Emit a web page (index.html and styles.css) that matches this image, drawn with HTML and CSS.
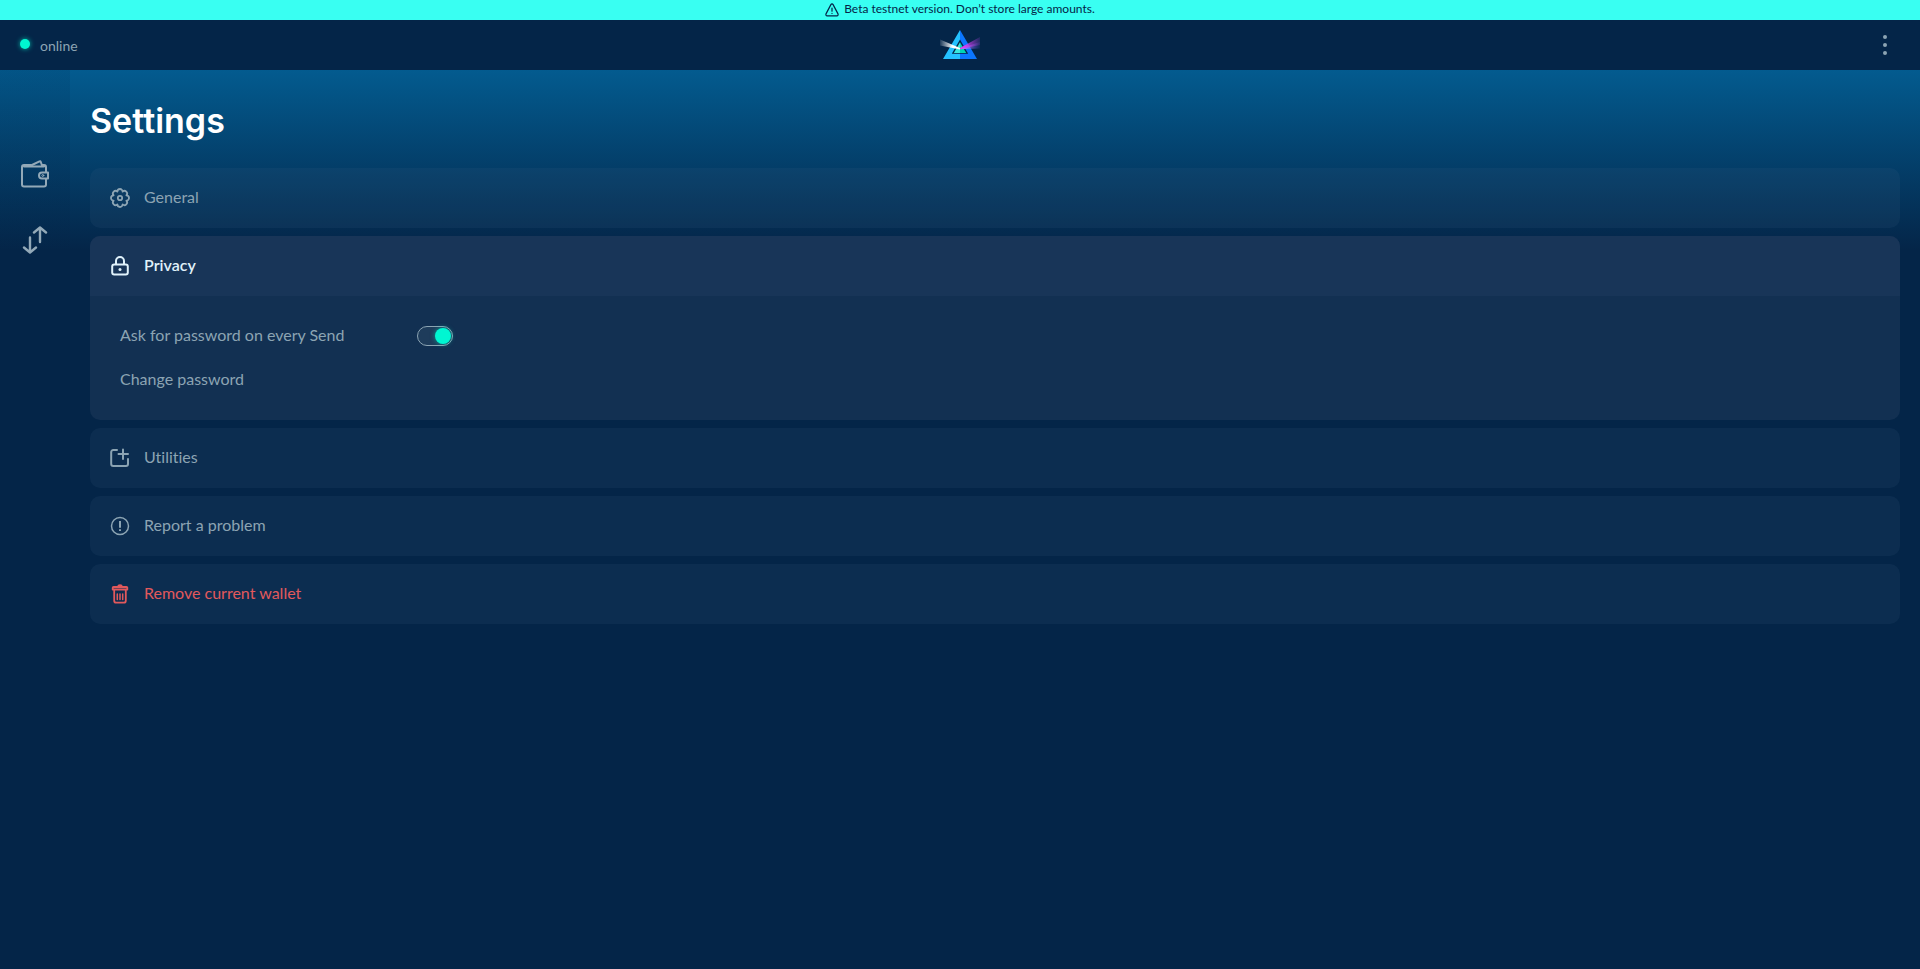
FILE: index.html
```html
<!DOCTYPE html>
<html lang="en">
<head>
<meta charset="utf-8">
<title>Settings</title>
<meta name="viewport" content="width=device-width, initial-scale=1">
<link rel="stylesheet" href="styles.css">
</head>
<body>
<div class="banner" role="status">
  <svg class="banner-icon" width="14" height="14" viewBox="0 0 14 14" fill="none" stroke="currentColor" stroke-width="1.2" stroke-linecap="round" stroke-linejoin="round"><path d="M5.9 1.6 1 10.9c-.4.9.1 1.900 1.100 1.900h9.800c1 0 1.500-1 1.100-1.900L8.100 1.600c-.5-.9-1.700-.9-2.200 0z"/><path d="M7 5v3.200M7 10.400v.1"/></svg>
  <span>Beta testnet version. Don’t store large amounts.</span>
</div>
<header class="topbar">
  <div class="status"><span class="status-dot"></span><span class="status-text">online</span></div>
  <a class="logo" href="#" aria-label="Home">
    <svg width="40" height="29" viewBox="0 0 40 29">
      <defs>
        <linearGradient id="beam-white" x1="0" x2="1"><stop offset="0" stop-color="#fff" stop-opacity="0.1"/><stop offset="0.65" stop-color="#fff"/></linearGradient>
        <linearGradient id="beam-pink" x1="0" x2="1"><stop offset="0.2" stop-color="#e03bf0"/><stop offset="1" stop-color="#8a3bc8" stop-opacity="0.2"/></linearGradient>
        <linearGradient id="beam-violet" x1="0" x2="1"><stop offset="0.2" stop-color="#a27bff"/><stop offset="1" stop-color="#5a4bd0" stop-opacity="0.1"/></linearGradient>
      </defs>
      <path fill="#24c1ff" d="M20 0v9.500L11.800 23.800H20V29H3z"/>
      <path fill="#0b76ff" d="M20 0v9.500l8.200 14.300H20V29h17z"/>
      <path fill="#39e8dc" d="M20 12.200V23h-6.200z"/>
      <path fill="#00d6b5" d="M20 12.200V23h6.200z"/>
      <path fill="url(#beam-white)" d="M0 9.500v6L20 19.500v-1.500z"/>
      <path fill="url(#beam-violet)" d="M20 18.500 40 12v6.500L20 19.300z"/>
      <path fill="url(#beam-pink)" d="M20 18 40 7v8L20 19z"/>
    </svg>
  </a>
  <button class="menu" type="button" aria-label="Menu">
    <svg width="4" height="20" viewBox="0 0 4 20" fill="currentColor"><circle cx="2" cy="2" r="2"/><circle cx="2" cy="10" r="2"/><circle cx="2" cy="18" r="2"/></svg>
  </button>
</header>
<div class="layout">
  <nav class="sidebar">
    <a class="nav-link" href="#" aria-label="Wallet">
      <svg width="28" height="28" viewBox="0 0 28 28" fill="none" stroke="currentColor" stroke-width="2" stroke-linejoin="round" stroke-linecap="round"><path d="M25 11.500V7a2 2 0 0 0-2-2h-2M10 5H3a2 2 0 0 0-2 2v17.500a2 2 0 0 0 2 2h20a2 2 0 0 0 2-2v-5M3 6.500h20"/><path d="m11 5 7.500-3.700c.7-.3 1-.2 1.200.4L21 5.500" stroke-width="2"/><path d="M27 12.500v6h-6a3 3 0 0 1 0-6z"/><circle cx="21.800" cy="15.500" r="1" stroke-width="1"/></svg>
    </a>
    <a class="nav-link" href="#" aria-label="Transactions">
      <svg width="28" height="28" viewBox="0 0 28 28" fill="none" stroke="currentColor" stroke-width="2.400" stroke-linejoin="round" stroke-linecap="round"><path d="M9 11.500V26M3 21.500l6 5 6-5M19 16V2M13 6.500l6-5 6 5"/></svg>
    </a>
  </nav>
  <main class="content">
    <h1 class="title">Settings</h1>
    <div class="cards">
      <section class="card">
        <button class="card-head" type="button">
          <svg width="20" height="20" viewBox="0 0 20 20" fill="none" stroke="currentColor" stroke-width="1.800" stroke-linejoin="round"><path d="M16.370 12.640A2.640 2.640 0 0 1 12.640 16.370A2.640 2.640 0 0 1 7.360 16.370A2.640 2.640 0 0 1 3.630 12.640A2.640 2.640 0 0 1 3.630 7.360A2.640 2.640 0 0 1 7.360 3.630A2.640 2.640 0 0 1 12.640 3.630A2.640 2.640 0 0 1 16.370 7.360A2.640 2.640 0 0 1 16.370 12.640z"/><circle cx="10" cy="10" r="2.200"/></svg>
          <span>General</span>
        </button>
      </section>
      <section class="card card-open">
        <button class="card-head" type="button" aria-expanded="true">
          <svg width="20" height="20" viewBox="0 0 20 20" fill="none" stroke="currentColor" stroke-width="2"><rect x="2.200" y="8.600" width="15.600" height="9.900" rx="2"/><path d="M6 8.600V5a4 4 0 0 1 8 0v3.600"/><circle cx="10" cy="13.500" r="1.500" fill="currentColor" stroke="none"/></svg>
          <span>Privacy</span>
        </button>
        <div class="card-body">
          <div class="row">
            <label for="ask-password">Ask for password on every Send</label>
            <input class="switch" id="ask-password" type="checkbox" role="switch" checked>
          </div>
          <button class="text-button" type="button">Change password</button>
        </div>
      </section>
      <section class="card">
        <button class="card-head" type="button">
          <svg width="20" height="20" viewBox="0 0 20 20" fill="none" stroke="currentColor" stroke-width="2" stroke-linecap="round" stroke-linejoin="round"><path d="M7 2H3.200a2 2 0 0 0-2 2v12a2 2 0 0 0 2 2H16a2 2 0 0 0 2-2v-5M13 1.500v9.500M8.500 6H18"/></svg>
          <span>Utilities</span>
        </button>
      </section>
      <section class="card">
        <button class="card-head" type="button">
          <svg width="20" height="20" viewBox="0 0 20 20" fill="none" stroke="currentColor"><circle cx="10" cy="10" r="8.500" stroke-width="1.500"/><path stroke-width="2" d="M10 5v6.800M10 13.200V15"/></svg>
          <span>Report a problem</span>
        </button>
      </section>
      <section class="card">
        <button class="card-head danger" type="button">
          <svg width="20" height="20" viewBox="0 0 20 20" fill="none" stroke="currentColor" stroke-width="1.800" stroke-linecap="round" stroke-linejoin="round"><path d="M3.500 3h13a.8.8 0 0 1 .8.8V5.500H2.700V3.800a.8.800 0 0 1 .8-.8zM8 2.600c.3-2 3.700-2 4 0M4.200 6v10.700a2 2 0 0 0 2 2h7.600a2 2 0 0 0 2-2V6"/><path stroke-width="1.500" d="M7.300 10v5.500M10 10v5.500M12.700 10v5.500"/></svg>
          <span>Remove current wallet</span>
        </button>
      </section>
    </div>
  </main>
</div>
</body>
</html>
```
FILE: styles.css
```css
* {
  box-sizing: border-box;
}

body {
  margin: 0;
  min-height: 100vh;
  display: flex;
  flex-direction: column;
  background: #042548;
  color: #8ca4b3;
  font-family: "Lato", "Open Sans", sans-serif;
  font-size: 16px;
  line-height: 20px;
  font-variant-ligatures: none;
}

button {
  border: 0;
  padding: 0;
  background: none;
  color: inherit;
  font: inherit;
  text-align: left;
  cursor: pointer;
}

a {
  color: inherit;
}

svg {
  display: block;
  flex: none;
}

.banner {
  display: flex;
  align-items: center;
  justify-content: center;
  gap: 5px;
  height: 20px;
  background: #39fff2;
  color: #042548;
  font-size: 12px;
  line-height: 18px;
}

.banner span {
  padding-bottom: 2px;
}

.topbar {
  display: grid;
  grid-template-columns: 1fr auto 1fr;
  align-items: center;
  height: 50px;
  padding: 0 20px;
}

.status {
  display: flex;
  align-items: center;
  gap: 10px;
  font-size: 14px;
}

.status-dot {
  width: 10px;
  height: 10px;
  margin-bottom: 2px;
  border-radius: 50%;
  background: #00f6d2;
  box-shadow: 0 0 5px rgba(0, 246, 210, 0.7);
}

.status-text {
  padding-top: 2px;
}

.logo {
  padding-bottom: 1px;
}

.menu {
  justify-self: end;
  padding: 0 13px;
}

.nav-link {
  color: #93a9b8;
}

.layout {
  flex: 1;
  display: flex;
  background: linear-gradient(#035b8f, #042548 180px);
}

.sidebar {
  width: 70px;
  padding-top: 90px;
  display: flex;
  flex-direction: column;
  align-items: center;
  gap: 38px;
  background: linear-gradient(rgba(4, 37, 72, 0.12), rgba(4, 37, 72, 0.2) 180px);
}

.content {
  flex: 1;
  padding: 31px 20px;
}

.title {
  margin: 0 0 27px;
  color: #fff;
  font-family: "Inter", sans-serif;
  font-size: 34px;
  font-weight: 600;
  line-height: 40px;
}

.cards {
  display: flex;
  flex-direction: column;
  gap: 8px;
}

.card {
  border-radius: 10px;
  background: rgba(74, 106, 136, 0.12);
  overflow: hidden;
}

.card-open {
  background: #123052;
}

.card-head {
  display: flex;
  align-items: center;
  gap: 14px;
  width: 100%;
  padding: 20px;
}

.card-head span,
.row label,
.text-button {
  padding-bottom: 2px;
  line-height: 18px;
}

.card-open .card-head {
  background: #183558;
  color: #e0f2fb;
  font-weight: 600;
}

.card-head.danger {
  color: #e2595c;
}

.card-body {
  display: flex;
  flex-direction: column;
  align-items: flex-start;
  gap: 24px;
  padding: 30px;
}

.row {
  display: flex;
  align-items: center;
  gap: 20px;
}

.row label {
  width: 277px;
}

.switch {
  appearance: none;
  display: flex;
  justify-content: flex-end;
  width: 36px;
  height: 20px;
  margin: 0;
  padding: 1px;
  border: 1px solid #8ca4b3;
  border-radius: 10px;
  background: #1e3c5b;
}

.switch::before {
  content: "";
  width: 16px;
  height: 16px;
  border-radius: 50%;
  background: #00f6d2;
  box-shadow: 0 0 5px rgba(0, 246, 210, 0.5);
}
```
